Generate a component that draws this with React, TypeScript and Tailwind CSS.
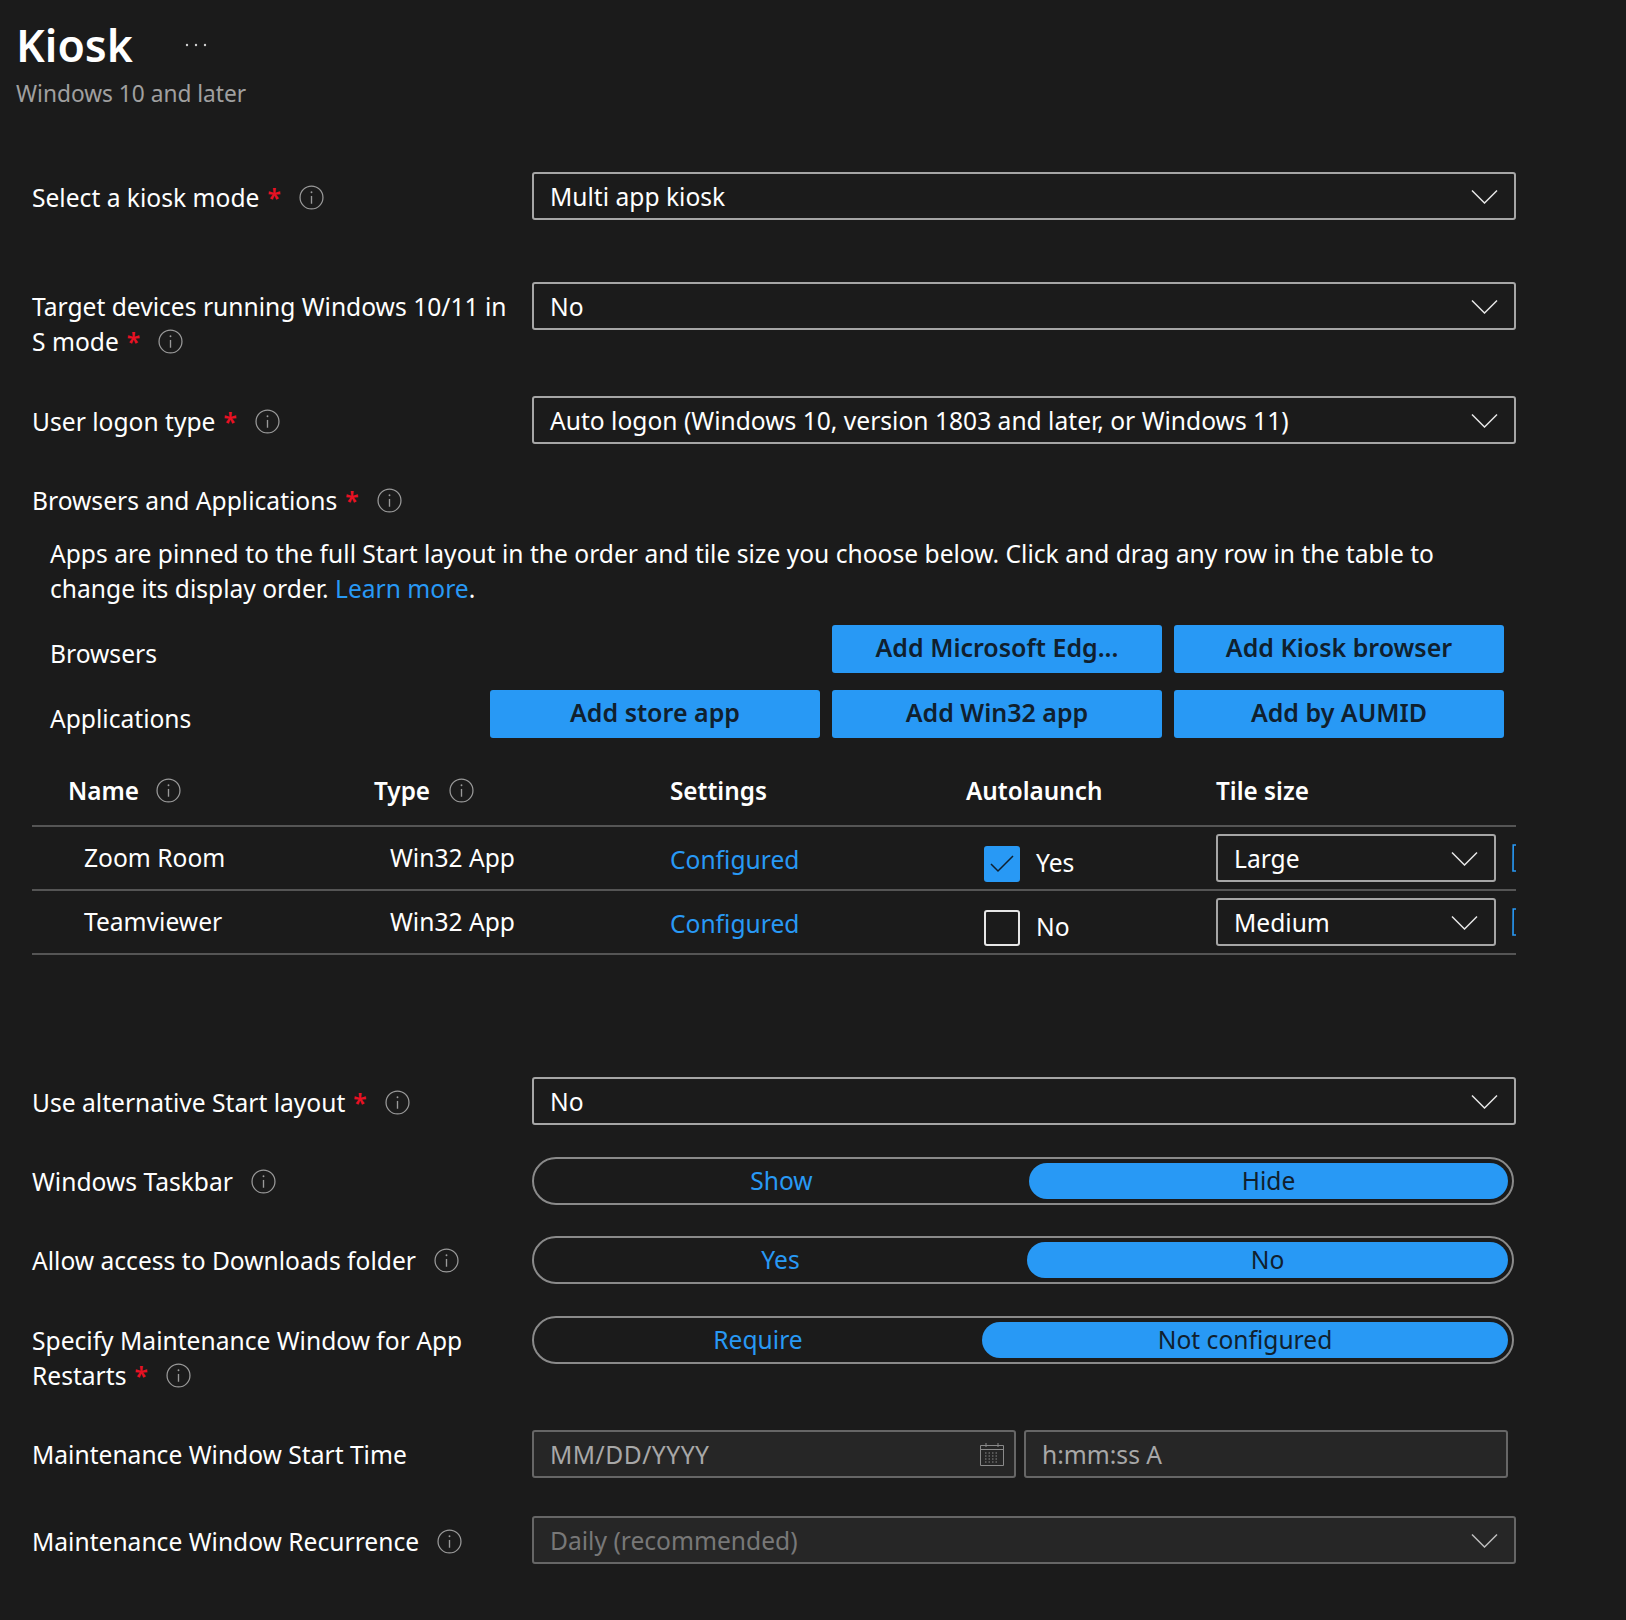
import React from 'react';

const Info = () => (
  <svg viewBox="0 0 24 24" className="w-[25px] h-[25px] shrink-0" fill="none" stroke="#9a9a9a" strokeWidth="1.2">
    <circle cx="12" cy="12" r="11" />
    <path d="M12 10.5V18" strokeWidth="1.3" />
    <circle cx="12" cy="7" r="0.9" fill="#9a9a9a" stroke="none" />
  </svg>
);

const Chevron = ({ color = '#e6e6e6' }: { color?: string }) => (
  <svg viewBox="0 0 27 15" className="w-[27px] h-[15px] shrink-0" fill="none" stroke={color} strokeWidth="1.5">
    <path d="M1 1.5L13.5 14L26 1.5" />
  </svg>
);

const Req = () => <span className="text-[#e81123] font-semibold ml-2">*</span>;

const Label = ({ text, required, top = 'pt-2' }: { text: string; required?: boolean; top?: string }) => {
  const words = text.split('|');
  return (
    <div className={`w-[500px] shrink-0 ${top} pr-2 text-white`}>
      {words.length > 1 && <div>{words[0]}</div>}
      <div className="flex items-center">
        <span>{words[words.length - 1]}</span>
        {required && <Req />}
        <span className="ml-[18px]"><Info /></span>
      </div>
    </div>
  );
};

const Select = ({ value, className = 'w-[984px]', disabled }: { value: string; className?: string; disabled?: boolean }) => (
  <div className={`${className} h-12 rounded-[3px] border-2 flex items-center justify-between pl-4 pr-4 ${disabled ? 'border-[#666666] bg-[#262626] text-[#787878]' : 'border-[#a6a6a6] text-white'}`}>
    <span>{value}</span>
    <Chevron color={disabled ? '#bdbdbd' : '#e6e6e6'} />
  </div>
);

const Pill = ({ left, right, leftW, thumbW }: { left: string; right: string; leftW: string; thumbW: string }) => (
  <div className="w-[982px] h-12 rounded-full border-2 border-[#8a8a8a] flex items-center pr-[4px]">
    <div className={`${leftW} text-center text-[#2899f5] pb-[2px]`}>{left}</div>
    <div className={`${thumbW} h-9 rounded-full bg-[#2899f5] text-center text-[#10202e] leading-9`}>{right}</div>
  </div>
);

const Btn = ({ children }: { children: React.ReactNode }) => (
  <div className="w-[330px] h-12 rounded-[3px] bg-[#2899f5] text-[#10202e] text-[25px] font-semibold flex items-center justify-center pb-1">{children}</div>
);

const Bracket = () => (
  <svg viewBox="0 0 4 28" className="w-1 h-7 shrink-0" fill="none" stroke="#2899f5" strokeWidth="1.6">
    <path d="M4 1H1.2L1 27H4" />
  </svg>
);

const apps = [
  { name: 'Zoom Room', on: true, size: 'Large' },
  { name: 'Teamviewer', on: false, size: 'Medium' },
];

export default function App() {
  return (
    <div className="h-[1620px] overflow-hidden bg-[#1b1b1b] text-white text-[24.6px] leading-[35px] font-['Noto_Sans',sans-serif]">
      <div className="pl-4 pt-[14px] h-[172px]">
        <div className="flex items-center h-[62px]">
          <h1 className="text-[44.5px] leading-[62px] font-semibold">Kiosk</h1>
          <svg viewBox="0 0 22 4" className="w-[22px] h-1 ml-[52px]" fill="#d0d0d0">
            <circle cx="2" cy="2" r="1.2" />
            <circle cx="11" cy="2" r="1.2" />
            <circle cx="20" cy="2" r="1.2" />
          </svg>
        </div>
        <div className="text-[#a0a0a0] text-[22.7px]">Windows 10 and later</div>
      </div>

      <div className="pl-8">
        <div className="flex h-[48px]">
          <Label text="Select a kiosk mode" required />
          <Select value="Multi app kiosk" />
        </div>
        <div className="flex mt-[62px] h-[78px]">
          <Label text="Target devices running Windows 10/11 in|S mode" required top="pt-[7px]" />
          <Select value="No" />
        </div>
        <div className="flex mt-9 h-[48px]">
          <Label text="User logon type" required />
          <Select value="Auto logon (Windows 10, version 1803 and later, or Windows 11)" />
        </div>

        <div className="mt-[39px] flex items-center h-[35px]">
          <span>Browsers and Applications</span>
          <Req />
          <span className="ml-[18px]"><Info /></span>
        </div>
        <div className="ml-[18px] mt-[18px] w-[1420px]">
          Apps are pinned to the full Start layout in the order and tile size you choose below. Click and drag any row in the table to change its display order. <span className="text-[#2899f5]">Learn more</span>.
        </div>

        <div className="mt-[19px] ml-[18px] w-[1454px] h-12 flex items-center justify-between">
          <span className="relative top-1">Browsers</span>
          <div className="flex gap-3">
            <Btn>Add Microsoft Edg...</Btn>
            <Btn>Add Kiosk browser</Btn>
          </div>
        </div>
        <div className="mt-[17px] ml-[18px] w-[1454px] h-12 flex items-center justify-between">
          <span className="relative top-1">Applications</span>
          <div className="flex gap-3">
            <Btn>Add store app</Btn>
            <Btn>Add Win32 app</Btn>
            <Btn>Add by AUMID</Btn>
          </div>
        </div>

        <div className="w-[1484px] mt-6 overflow-hidden">
          <div className="grid grid-cols-[342px_296px_296px_250px_300px] h-[65px] items-center border-b-2 border-[#555555] font-semibold text-[24.3px] pb-[6px]">
            <div className="pl-9 flex items-center gap-[17px]">Name <Info /></div>
            <div className="flex items-center gap-[19px]">Type <Info /></div>
            <div>Settings</div>
            <div>Autolaunch</div>
            <div>Tile size</div>
          </div>
          {apps.map(a => (
            <div key={a.name} className="grid grid-cols-[342px_296px_296px_250px_300px] h-[64px] items-center border-b-2 border-[#555555]">
              <div className="pl-[52px] -mt-[2px]">{a.name}</div>
              <div className="pl-4 -mt-[2px]">Win32 App</div>
              <div className="text-[#2899f5] mt-[2px]">Configured</div>
              <div className="pl-[18px] flex items-center gap-4 mt-[10px]">
                {a.on ? (
                  <div className="w-9 h-9 rounded-[3px] bg-[#2899f5] flex items-center justify-center relative top-[1px]">
                    <svg viewBox="0 0 24 18" className="w-6 h-[18px]" fill="none" stroke="#10202e" strokeWidth="1.5">
                      <path d="M1 9L8 16L23 1" />
                    </svg>
                  </div>
                ) : (
                  <div className="w-9 h-9 rounded-[3px] border-2 border-[#e6e6e6] relative top-[1px]" />
                )}
                <span className="relative -top-[1px]">{a.on ? 'Yes' : 'No'}</span>
              </div>
              <div className="flex items-center gap-4">
                <Select value={a.size} className="w-[280px]" />
                <Bracket />
              </div>
            </div>
          ))}
        </div>

        <div className="flex mt-[122px] h-[48px]">
          <Label text="Use alternative Start layout" required />
          <Select value="No" />
        </div>
        <div className="flex mt-8 h-[48px]">
          <Label text="Windows Taskbar" top="pt-[7px]" />
          <Pill left="Show" right="Hide" leftW="w-[495px]" thumbW="w-[479px]" />
        </div>
        <div className="flex mt-[31px] h-[48px]">
          <Label text="Allow access to Downloads folder" top="pt-[7px]" />
          <Pill left="Yes" right="No" leftW="w-[493px]" thumbW="w-[481px]" />
        </div>
        <div className="flex mt-8 h-[78px]">
          <Label text="Specify Maintenance Window for App|Restarts" required top="pt-[7px]" />
          <Pill left="Require" right="Not configured" leftW="w-[448px]" thumbW="w-[526px]" />
        </div>
        <div className="flex mt-9 h-[48px]">
          <div className="w-[500px] shrink-0 pt-[7px]">Maintenance Window Start Time</div>
          <div className="flex gap-2">
            <div className="w-[484px] h-12 rounded-[3px] border-2 border-[#666666] bg-[#262626] text-[#a8a8a8] flex items-center justify-between pl-4 pr-[10px]">
              <span className="tracking-[0.5px]">MM/DD/YYYY</span>
              <svg viewBox="0 0 24 24" className="w-6 h-6" fill="none" stroke="#8a8a8a" strokeWidth="1">
                <path d="M.5 3.5h23v20H.5zM.5 7.5h23M6 1v4M18 1v4" />
                <path d="M5 11h14M5 14h14M5 17h14M5 20h14" strokeDasharray="1.5 2" />
              </svg>
            </div>
            <div className="w-[484px] h-12 rounded-[3px] border-2 border-[#666666] bg-[#262626] text-[#a8a8a8] flex items-center pl-4">h:mm:ss A</div>
          </div>
        </div>
        <div className="flex mt-[38px] h-[48px]">
          <Label text="Maintenance Window Recurrence" />
          <Select value="Daily (recommended)" disabled />
        </div>
      </div>
    </div>
  );
}
